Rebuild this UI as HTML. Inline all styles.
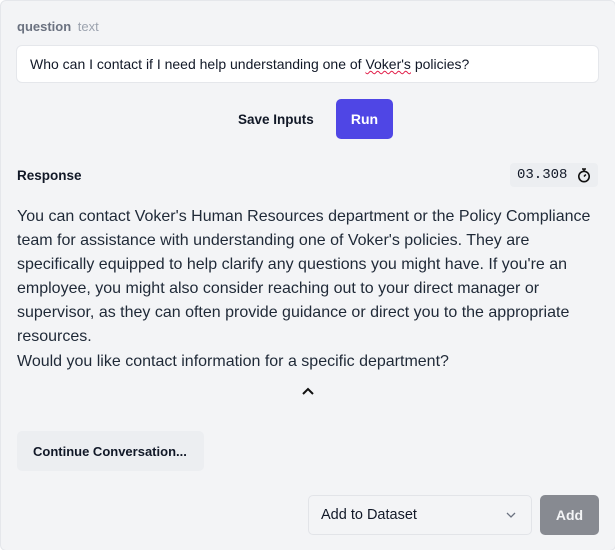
<!DOCTYPE html>
<html><head><meta charset="utf-8"><style>
*{box-sizing:border-box;margin:0;padding:0}
html,body{width:615px;height:550px;overflow:hidden;background:#fff}
body{font-family:"Liberation Sans",sans-serif;color:#111827;position:relative}
.panel{position:absolute;left:0;top:0;width:616px;height:551px;background:#f3f4f6;border:1px solid #e5e7eb;border-radius:6px}
.abs{position:absolute}
</style></head><body>
<div class="panel"></div>
<div class="abs" style="left:17px;top:19px;font-size:13px;font-weight:bold;color:#6b7280">question <span style="font-weight:normal;color:#9ca3af;margin-left:3px">text</span></div>
<div class="abs" style="left:16px;top:45px;width:583px;height:38px;background:#fff;border:1px solid #e5e7eb;border-radius:6px;font-size:14px;padding:10px 0 0 13px;color:#111827">Who can I contact if I need help understanding one of <span style="text-decoration:underline wavy #e11d48;text-decoration-thickness:1px">Voker's</span> policies?</div>
<div class="abs" style="left:238px;top:112px;font-size:13.5px;font-weight:bold">Save Inputs</div>
<div class="abs" style="left:336px;top:99px;width:57px;height:40px;background:#4f46e5;border-radius:5px;color:#fff;font-size:14px;font-weight:bold;text-align:center;line-height:40px">Run</div>
<div class="abs" style="left:17px;top:168px;font-size:13.5px;font-weight:bold">Response</div>
<div class="abs" style="left:510px;top:163px;width:88px;height:24px;background:#eceef1;border-radius:4px;font-family:'Liberation Mono',monospace;font-size:14px;line-height:24px;padding-left:7px">03.308
<svg class="abs" style="left:66px;top:4px" width="16" height="16" viewBox="0 0 16 16" fill="none" stroke="#111" stroke-width="1.6"><circle cx="8" cy="9.5" r="5.2"/><path d="M6 2h4M8 2v2.3M8 9.5l1.8-2"/></svg></div>
<div class="abs" style="left:17px;top:205px;width:578px;font-size:16px;line-height:24.1px;color:#1f2937">You can contact Voker's Human Resources department or the Policy Compliance team for assistance with understanding one of Voker's policies. They are specifically equipped to help clarify any questions you might have. If you're an employee, you might also consider reaching out to your direct manager or supervisor, as they can often provide guidance or direct you to the appropriate resources.<br>Would you like contact information for a specific department?</div>
<svg class="abs" style="left:300px;top:385px" width="16" height="12" viewBox="0 0 16 12" fill="none" stroke="#111" stroke-width="2"><path d="M3 9l5-5 5 5"/></svg>
<div class="abs" style="left:17px;top:431px;width:187px;height:40px;background:#eceef1;border-radius:5px;font-size:13px;font-weight:bold;line-height:41px;padding-left:16px">Continue Conversation...</div>
<div class="abs" style="left:308px;top:495px;width:224px;height:40px;background:#f3f4f6;border:1px solid #e2e4e8;border-radius:5px;font-size:14.5px;line-height:39px;padding-left:12px">Add to Dataset
<svg class="abs" style="left:196px;top:14px" width="12" height="10" viewBox="0 0 12 10" fill="none" stroke="#6b7280" stroke-width="1.3"><path d="M2 3l4 4 4-4"/></svg></div>
<div class="abs" style="left:540px;top:495px;width:59px;height:40px;background:#878a91;border-radius:5px;color:#f3f4f6;font-size:14px;font-weight:bold;text-align:center;line-height:40px">Add</div>
</body></html>
